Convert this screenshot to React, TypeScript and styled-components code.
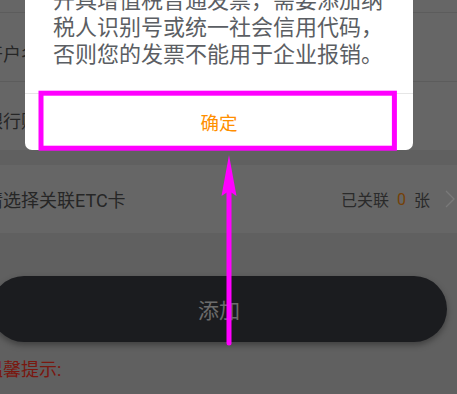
import React from "react";
import styled, { createGlobalStyle } from "styled-components";

const GlobalStyle = createGlobalStyle`
  html, body {
    margin: 0;
    padding: 0;
    width: 457px;
    height: 394px;
    overflow: hidden;
    background: #c0c0c0;
    font-family: "Roboto", "Noto Sans CJK SC", sans-serif;
  }
  * {
    box-sizing: border-box;
  }
`;

const Viewport = styled.div`
  position: relative;
  width: 457px;
  height: 394px;
  overflow: hidden;
`;

const Screen = styled.div`
  position: relative;
  width: 488px;
  height: 450px;
  margin: -56px 0 0 -25px;
  background: #c0c0c0;
`;

const List = styled.div<{ spaced?: boolean }>`
  display: flex;
  flex-direction: column;
  margin-top: ${(p) => (p.spaced ? "15px" : "0")};
  background: #cccccc;
`;

const Row = styled.div<{ last?: boolean }>`
  display: flex;
  align-items: center;
  justify-content: space-between;
  height: ${(p) => (p.last ? "68px" : "69px")};
  padding: 0 8px 0 10px;
  border-bottom: ${(p) => (p.last ? "none" : "1px solid #b8b8b8")};
`;

const Label = styled.span<{ drop?: number }>`
  padding-top: ${(p) => p.drop ?? 0}px;
  font-size: 18px;
  color: #4c4c4c;
  white-space: nowrap;
`;

const Value = styled.div`
  display: flex;
  align-items: center;
  font-size: 16px;
  color: #555555;
`;

const Count = styled.span`
  margin: 0 8px 0 8px;
  color: #e8820c;
`;

const Unit = styled.span`
  margin-right: 15px;
`;

const AddButton = styled.button`
  display: flex;
  align-items: center;
  justify-content: center;
  width: 456px;
  height: 66px;
  margin: 43px auto 0;
  border: none;
  border-radius: 33px;
  background: #36383f;
  box-shadow: 0 3px 6px rgba(0, 0, 0, 0.35);
  font-family: "Noto Sans CJK SC", sans-serif;
  font-size: 21px;
  color: #d8d8d8;
`;

const Tip = styled.div`
  margin: 16px 0 0 10px;
  font-size: 18px;
  line-height: 24px;
  color: #f2301e;
`;

const Overlay = styled.div`
  position: absolute;
  inset: 0;
  background: rgba(0, 0, 0, 0.5);
`;

const Dialog = styled.div`
  position: absolute;
  left: 50px;
  right: 50px;
  bottom: 244px;
  background: #ffffff;
  border-radius: 7px;
  overflow: hidden;
`;

const DialogText = styled.p`
  margin: 0;
  padding: 20px 28px 27px;
  font-family: "Noto Sans CJK SC", sans-serif;
  font-size: 22px;
  line-height: 27px;
  color: #5b5e63;
`;

const DialogFooter = styled.div`
  display: flex;
  align-items: center;
  justify-content: center;
  height: 57px;
  border-top: 1px solid #e6e6e6;
`;

const ConfirmButton = styled.button`
  border: none;
  background: none;
  padding: 0;
  font-family: "Noto Sans CJK SC", sans-serif;
  font-size: 18.5px;
  color: #ff8f00;
`;

const Annotation = styled.svg`
  position: absolute;
  left: 0;
  top: 0;
  width: 457px;
  height: 394px;
  pointer-events: none;
`;

const Chevron = () => (
  <svg width="10" height="18" viewBox="0 0 10 18">
    <polyline
      points="1,1 9,9 1,17"
      fill="none"
      stroke="#f2f2f2"
      strokeWidth="1.3"
    />
  </svg>
);

export default function App() {
  return (
    <>
      <GlobalStyle />
      <Viewport>
        <Screen>
          <List>
            <Row>
              <Label>持卡人姓名</Label>
            </Row>
            <Row>
              <Label drop={12}>开户名称</Label>
            </Row>
            <Row last>
              <Label drop={8}>银行账号</Label>
            </Row>
          </List>
          <List spaced>
            <Row last>
              <Label>请选择关联ETC卡</Label>
              <Value>
                已关联
                <Count>0</Count>
                <Unit>张</Unit>
                <Chevron />
              </Value>
            </Row>
          </List>
          <AddButton>添加</AddButton>
          <Tip>温馨提示:</Tip>
          <Overlay>
            <Dialog>
              <DialogText>
                尊敬的用户，若您为企业用户需要开具增值税普通发票，需要添加纳税人识别号或统一社会信用代码，否则您的发票不能用于企业报销。
              </DialogText>
              <DialogFooter>
                <ConfirmButton>确定</ConfirmButton>
              </DialogFooter>
            </Dialog>
          </Overlay>
        </Screen>
        <Annotation viewBox="0 0 457 394">
          <rect
            x="41"
            y="93.2"
            width="353.4"
            height="55"
            fill="none"
            stroke="#ff00ff"
            strokeWidth="5"
          />
          <line
            x1="229"
            y1="343"
            x2="229"
            y2="188"
            stroke="#ff00ff"
            strokeWidth="5"
            strokeLinecap="round"
          />
          <polygon points="229,155 236.5,196 229,191 221.5,196" fill="#ff00ff" />
        </Annotation>
      </Viewport>
    </>
  );
}
